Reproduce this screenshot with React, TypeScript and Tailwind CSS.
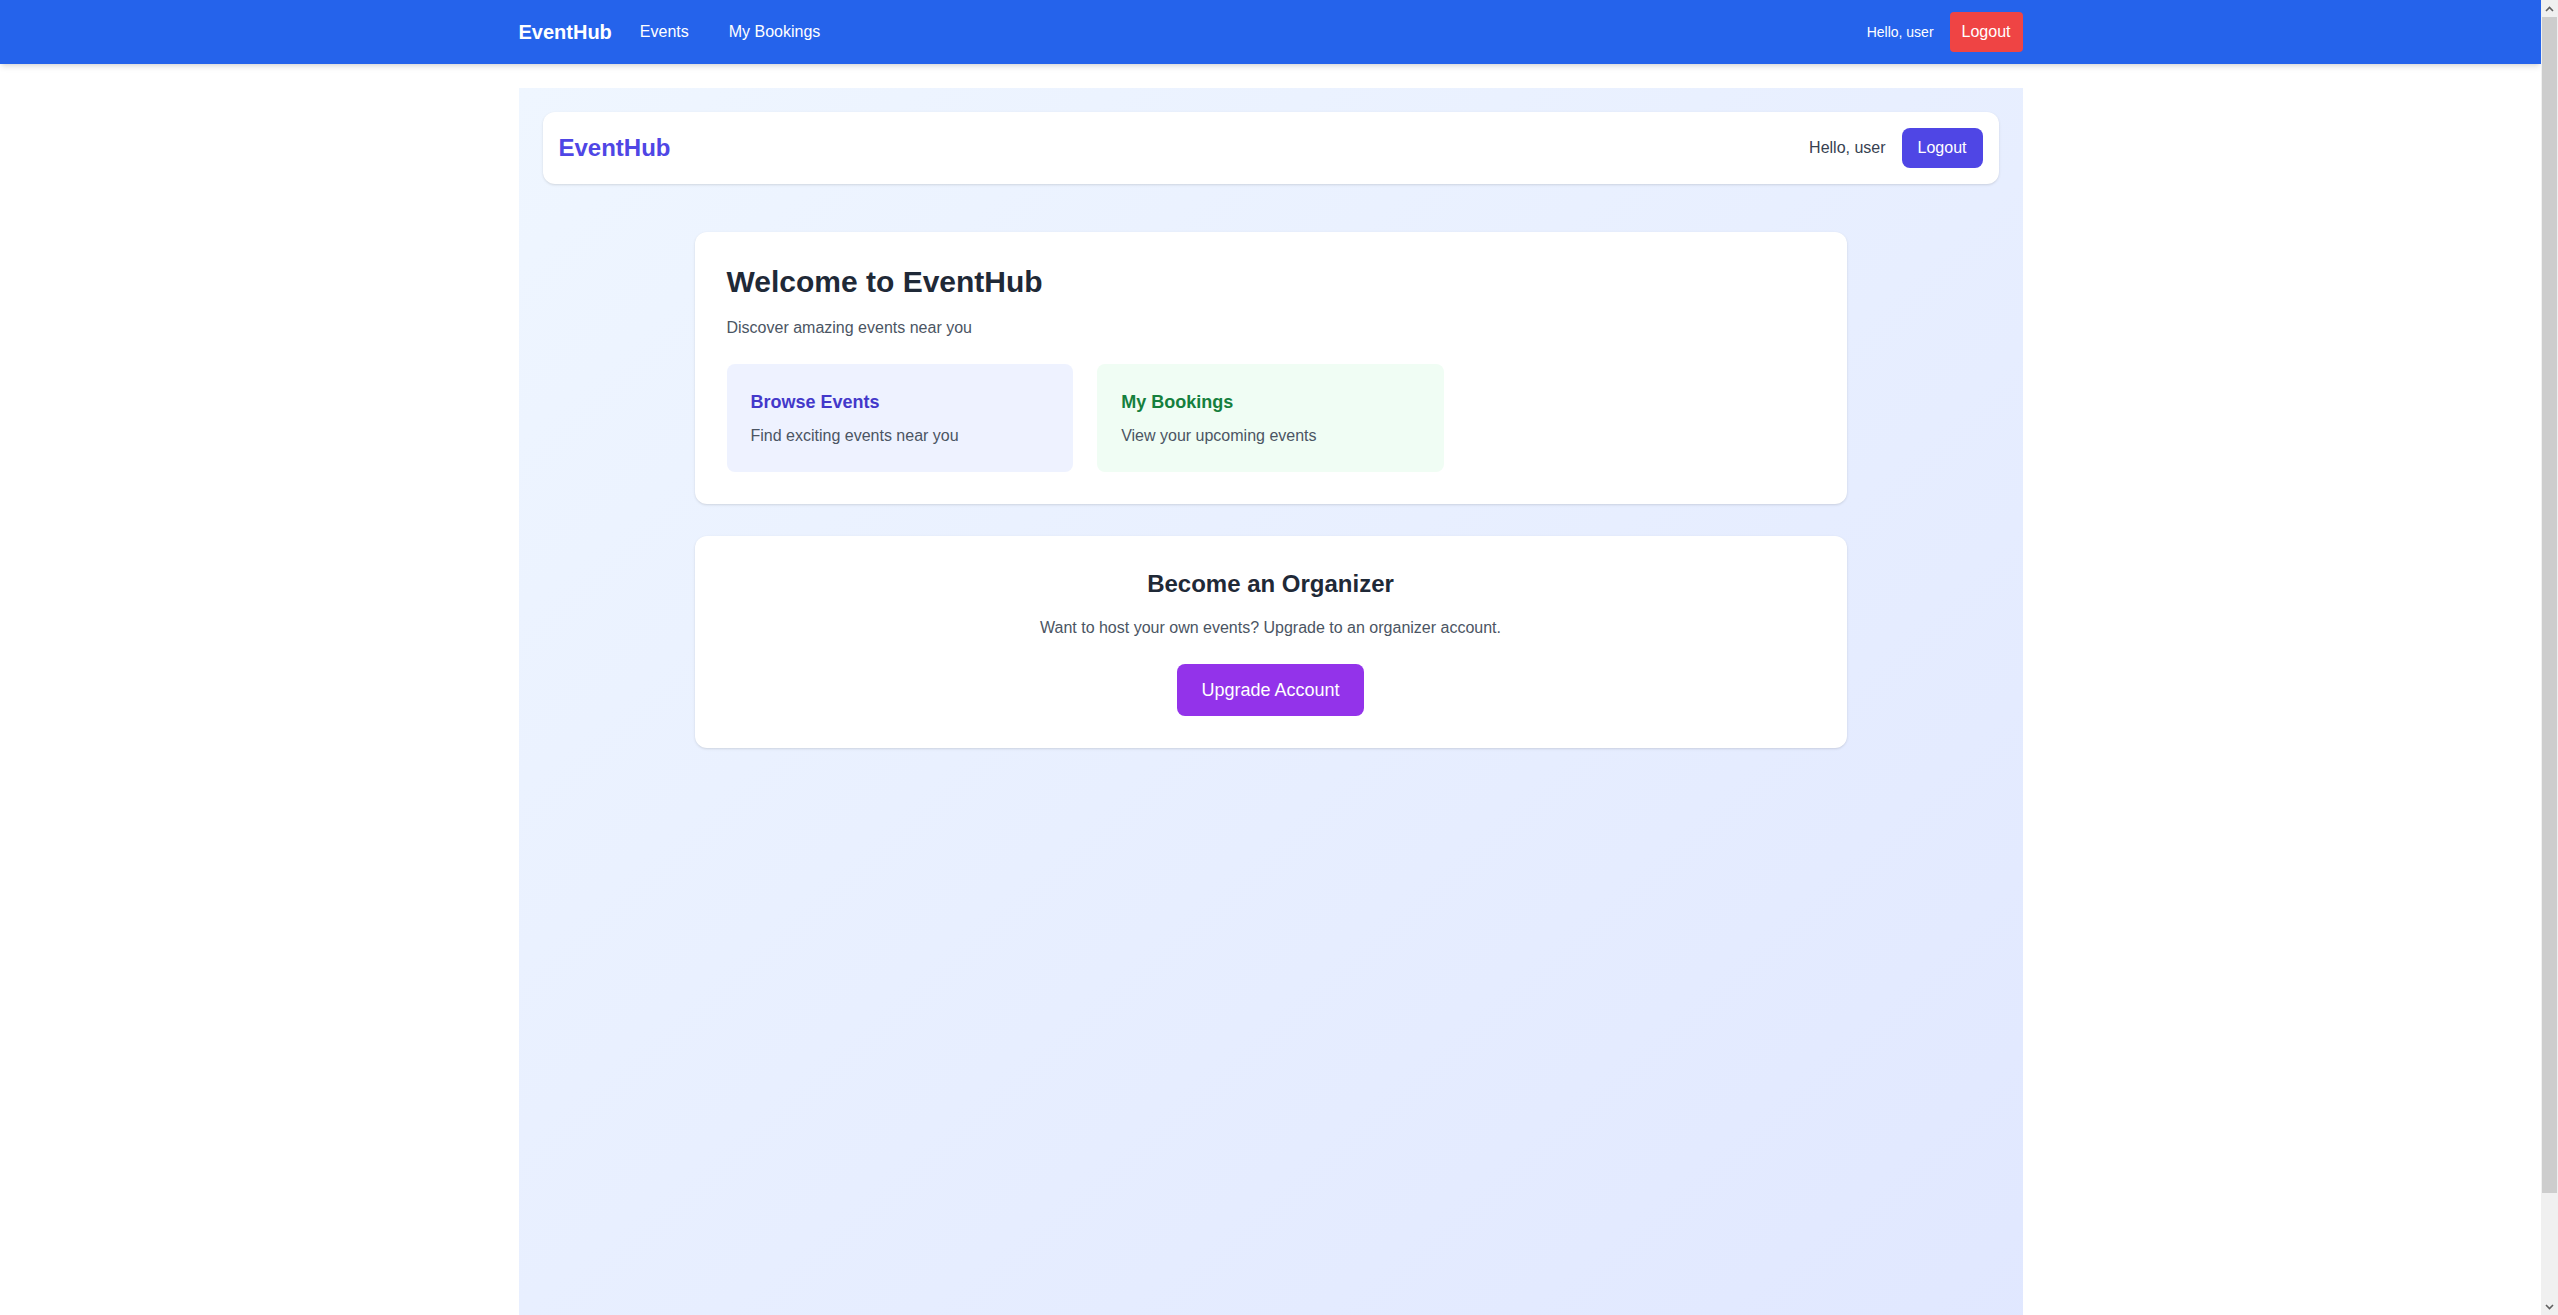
function ScrollbarStrip () {
  return (
    <div className="w-[17px] h-screen bg-[#f0f0f0] flex flex-col shrink-0">
      <div className="h-[17px] flex items-center justify-center">
        <svg width="9" height="6" viewBox="0 0 9 6"><path d="M1 5 L4.5 1.5 L8 5" stroke="#606060" strokeWidth="1.6" fill="none" /></svg>
      </div>
      <div className="h-[1176px] mx-[1px] bg-[#cdcdcd]" />
      <div className="flex-1" />
      <div className="h-[17px] flex items-center justify-center">
        <svg width="9" height="6" viewBox="0 0 9 6"><path d="M1 1 L4.5 4.5 L8 1" stroke="#606060" strokeWidth="1.6" fill="none" /></svg>
      </div>
    </div>
  )
}

export default function App () {
  return (
    <div className="flex h-screen overflow-hidden bg-white font-['Liberation_Sans',Arial,sans-serif]">
      <div className="flex-1 min-w-0">
        <nav className="bg-[#2563eb] text-white shadow-md">
          <div className="container mx-auto px-4 py-3 flex items-center justify-between">
            <div className="flex items-center gap-4">
              <span className="text-xl font-bold">EventHub</span>
              <a href="#" className="px-3 py-2">Events</a>
              <a href="#" className="px-3 py-2">My Bookings</a>
            </div>
            <div className="flex items-center gap-4">
              <span className="text-sm">Hello, user</span>
              <button className="bg-[#ef4444] px-3 py-2 rounded">Logout</button>
            </div>
          </div>
        </nav>

        <main className="container mx-auto px-4 py-6">
          <div className="min-h-screen bg-linear-to-br from-[#eff6ff] to-[#e0e7ff] p-6">
            <header className="bg-white rounded-xl shadow-sm p-4 flex items-center justify-between">
              <span className="text-2xl font-bold text-[#4f46e5]">EventHub</span>
              <div className="flex items-center gap-4">
                <span className="text-[#374151]">Hello, user</span>
                <button className="bg-[#4f46e5] text-white px-4 py-2 rounded-lg">Logout</button>
              </div>
            </header>

            <div className="max-w-6xl mx-auto mt-12">
              <section className="bg-white rounded-xl shadow-sm p-8">
                <h1 className="text-3xl font-bold text-[#1f2937] mb-4">Welcome to EventHub</h1>
                <p className="text-[#4b5563] mb-6">Discover amazing events near you</p>
                <div className="grid grid-cols-3 gap-6">
                  <a href="#" className="bg-[#eef2ff] rounded-lg p-6">
                    <h3 className="text-lg font-semibold text-[#4338ca] mb-2">Browse Events</h3>
                    <p className="text-[#4b5563]">Find exciting events near you</p>
                  </a>
                  <a href="#" className="bg-[#f0fdf4] rounded-lg p-6">
                    <h3 className="text-lg font-semibold text-[#15803d] mb-2">My Bookings</h3>
                    <p className="text-[#4b5563]">View your upcoming events</p>
                  </a>
                </div>
              </section>

              <section className="bg-white rounded-xl shadow-sm p-8 mt-8 text-center">
                <h2 className="text-2xl font-bold text-[#1f2937] mb-4">Become an Organizer</h2>
                <p className="text-[#4b5563] mb-6">Want to host your own events? Upgrade to an organizer account.</p>
                <button className="bg-[#9333ea] text-white text-lg px-6 py-3 rounded-lg">Upgrade Account</button>
              </section>
            </div>
          </div>
        </main>
      </div>
      <ScrollbarStrip />
    </div>
  )
}
